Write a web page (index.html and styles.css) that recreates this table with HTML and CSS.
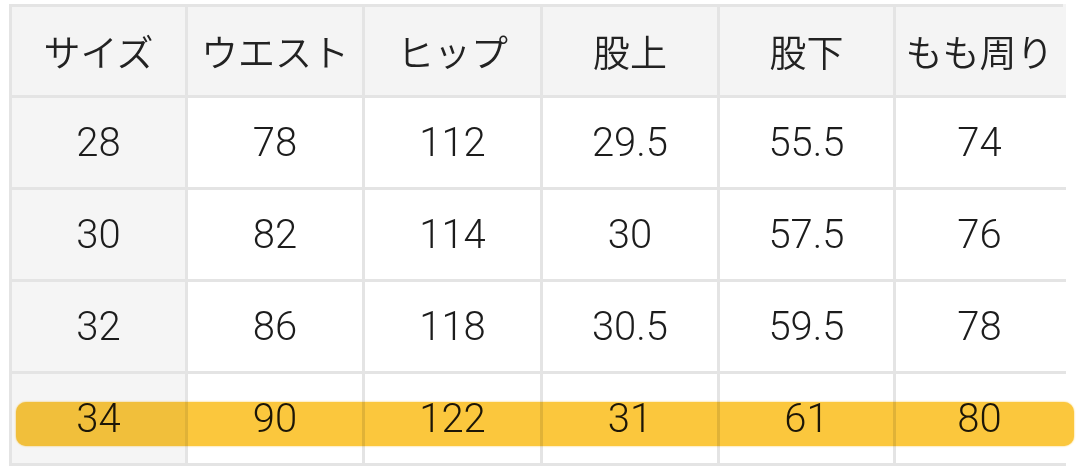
FILE: index.html
```html
<!DOCTYPE html>
<html lang="ja">
<head>
<meta charset="utf-8">
<link rel="stylesheet" href="styles.css">
</head>
<body>
<div class="wrap">
  <table class="size-table">
    <colgroup>
      <col class="c1"><col class="c2"><col class="c3"><col class="c4"><col class="c5"><col class="c6">
    </colgroup>
    <thead>
      <tr class="head"><th>サイズ</th><th>ウエスト</th><th>ヒップ</th><th>股上</th><th>股下</th><th>もも周り</th></tr>
    </thead>
    <tbody>
      <tr class="r1"><td class="first">28</td><td>78</td><td>112</td><td>29.5</td><td>55.5</td><td>74</td></tr>
      <tr class="r2"><td class="first">30</td><td>82</td><td>114</td><td>30</td><td>57.5</td><td>76</td></tr>
      <tr class="r3"><td class="first">32</td><td>86</td><td>118</td><td>30.5</td><td>59.5</td><td>78</td></tr>
      <tr class="r4"><td class="first">34</td><td>90</td><td>122</td><td>31</td><td>61</td><td>80</td></tr>
    </tbody>
  </table>
  <div class="marker"></div>
</div>
</body>
</html>
```

FILE: styles.css
```css
html, body {
  margin: 0;
  padding: 0;
  background: #ffffff;
}
body {
  width: 1080px;
  height: 467px;
  overflow: hidden;
  font-family: "Noto Sans CJK JP", "Noto Sans", sans-serif;
  color: #222222;
}
.wrap {
  position: relative;
  width: 1080px;
  height: 467px;
  padding: 4px 0 0 9px;
  box-sizing: border-box;
}
.size-table {
  border-collapse: collapse;
  table-layout: fixed;
  width: 1054px;
}
.c1 { width: 176px; }
.c2 { width: 177px; }
.c3 { width: 178px; }
.c4 { width: 177px; }
.c5 { width: 176px; }
.c6 { width: 170px; }
.size-table th,
.size-table td {
  border: 3px solid #e4e4e4;
  text-align: center;
  vertical-align: middle;
  padding: 0;
  line-height: 1;
}
.size-table th {
  background: #f4f4f4;
  font-size: 37px;
  font-weight: 350;
}
.size-table td {
  font-family: "Roboto", "Noto Sans CJK JP", sans-serif;
  font-size: 40px;
  font-weight: 300;
  color: #1c1c1c;
}
.size-table th:last-child,
.size-table td:last-child {
  border-right: 3px solid #ffffff;
}
.size-table td.first {
  background: #f5f5f5;
}
.head th { height: 88px; }
.head th:last-child { border-right-color: #f4f4f4; }
.r1 td, .r2 td, .r3 td, .r4 td { height: 89px; }
.marker {
  position: absolute;
  left: 16px;
  top: 402px;
  width: 1058px;
  height: 44px;
  border-radius: 10px;
  background: #fbc73d;
  mix-blend-mode: multiply;
  box-shadow: 0 0 2px #fbc73d;
}
```
